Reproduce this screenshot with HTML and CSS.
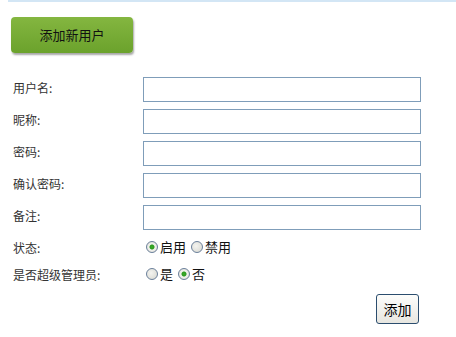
FILE: index.html
```html
<!DOCTYPE html>
<html lang="zh-CN">
<head>
    <meta charset="UTF-8">
    <title>添加新用户</title>
    <link rel="stylesheet" href="styles.css">
</head>
<body>
    <div class="top-line"></div>
    <div class="page">
        <div class="title-btn">添加新用户</div>
        <form class="user-form">
            <label>用户名:</label>
            <input type="text" class="field">
            <label>昵称:</label>
            <input type="text" class="field">
            <label>密码:</label>
            <input type="password" class="field">
            <label>确认密码:</label>
            <input type="password" class="field">
            <label>备注:</label>
            <input type="text" class="field">
            <label class="radio-label">状态:</label>
            <div class="radios">
                <input type="radio" name="status" checked><span>启用</span>
                <input type="radio" name="status"><span>禁用</span>
            </div>
            <label class="radio-label">是否超级管理员:</label>
            <div class="radios">
                <input type="radio" name="admin"><span>是</span>
                <input type="radio" name="admin" checked><span>否</span>
            </div>
            <div></div>
            <div class="actions">
                <button type="button" class="add-btn">添加</button>
            </div>
        </form>
    </div>
</body>
</html>
```

FILE: styles.css
```css
body {
    margin: 0;
    padding: 0;
    background-color: #fff;
    font-family: "Noto Sans CJK SC", "Liberation Sans", sans-serif;
    font-size: 12px;
    color: #333;
}
.top-line {
    height: 2px;
    margin-left: 8px;
    background-color: #d3e6f5;
}
.page {
    padding: 15px 0 0 11px;
}
.title-btn {
    width: 122px;
    height: 36px;
    line-height: 36px;
    text-align: center;
    font-size: 13px;
    color: #111;
    background: linear-gradient(#84b640, #6ba22c);
    border-radius: 4px;
    box-shadow: 1px 2px 2px rgba(0, 0, 0, 0.35);
}
.user-form {
    display: grid;
    grid-template-columns: 130px 278px;
    row-gap: 7px;
    margin: 24px 0 0 2px;
}
.user-form label {
    display: flex;
    align-items: center;
    line-height: 17px;
    padding-bottom: 5px;
}
.user-form .radio-label {
    padding-bottom: 0;
    height: 20px;
}
.field {
    box-sizing: border-box;
    width: 278px;
    height: 25px;
    margin: 0;
    border: 1px solid #7f9db9;
    padding: 2px 4px;
}
.radios {
    height: 20px;
    line-height: 18px;
    display: flex;
    align-items: center;
    font-size: 13px;
    color: #111;
}
.radios input {
    appearance: none;
    -webkit-appearance: none;
    box-sizing: border-box;
    width: 12px;
    height: 12px;
    margin: 0 2px 0 3px;
    border: 1px solid #6a7f9a;
    border-radius: 50%;
    background: radial-gradient(circle at 40% 40%, #f4f4f0, #d6d6cf);
}
.radios input:checked {
    background: radial-gradient(circle, #3fae2b 0, #2c9a1f 2px, #f4f4f0 3px, #dcdcd5 6px);
}
.radios span {
    margin-right: 2px;
}
.actions {
    display: flex;
    justify-content: flex-end;
    padding: 3px 2px 0 0;
}
.add-btn {
    width: 43px;
    height: 30px;
    font-family: "Noto Sans CJK SC", sans-serif;
    font-size: 14px;
    color: #000;
    padding: 0;
    border: 1px solid #2b4d6e;
    border-radius: 3px;
    background: linear-gradient(#fdfdfb, #e7e6e0);
}
```
